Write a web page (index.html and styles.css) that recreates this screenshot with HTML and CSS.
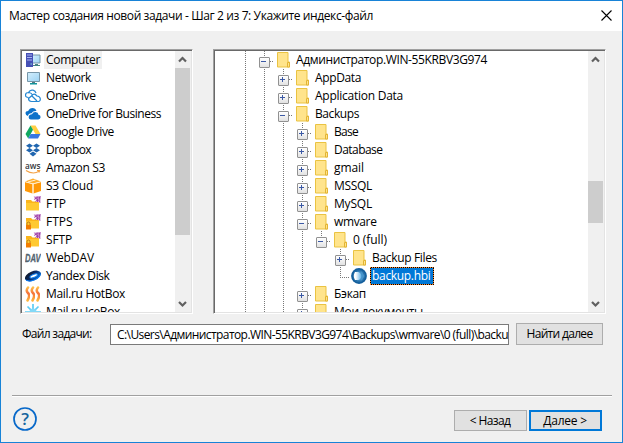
FILE: index.html
```html
<!DOCTYPE html>
<html lang="ru">
<head>
<meta charset="utf-8">
<title>Мастер создания новой задачи</title>
<link rel="stylesheet" href="styles.css">
</head>
<body>
<svg class="sprite" aria-hidden="true">
  <symbol id="folder" viewBox="0 0 13 16"><path d="M.5.5h10.500v9.500h1.500v5H.5z" fill="#ffe48c" stroke="#eac342"/><path d="M10.500 15v-4.500h2V15z" fill="#ffe48b" stroke="#e2b434"/></symbol>
  <symbol id="ftp" viewBox="0 0 16 16"><path d="M1 4h5l1.500 1.500H14V14H1z" fill="#fbb51b"/><path d="M1 7h13v7.500H1z" fill="#ffc931"/><path d="M9 0h6.500v6.500L12 6 9 3z" fill="#ecd3ef"/><path d="M9.500.8l5.500 5.500M9.300 3.500q4-4 6-1.500M12 .5l.5 5.500M10.500 5.500q3.500-2 5-5M14.700.5v6" fill="none" stroke="#9a35a3" stroke-width=".9"/></symbol>
  <symbol id="lock" viewBox="0 0 16 16"><path d="M2 11V9.500a1.500 1.500 0 013 0V11" fill="none" stroke="#b97413"/><path d="M1 11h5v4.500H1z" fill="#f27c00"/></symbol>
  <symbol id="flame" viewBox="0 0 5 16"><path d="M3 1.500q-2.500 3 0 5.500t-.5 7.500" fill="none" stroke="url(#heat)" stroke-width="2.500" stroke-linecap="round"/></symbol>
  <defs>
    <linearGradient id="heat" gradientUnits="userSpaceOnUse" x1="0" y1="1" x2="0" y2="15"><stop offset="0" stop-color="#ffc14a"/><stop offset=".45" stop-color="#f5713b"/><stop offset="1" stop-color="#ffb83d"/></linearGradient>
    <linearGradient id="screen" x2="1" y2="1"><stop stop-color="#d4eefc"/><stop offset="1" stop-color="#9bd2f3"/></linearGradient>
    <linearGradient id="disk" x2="1" y2="1"><stop stop-color="#111"/><stop offset=".5" stop-color="#0a2e70"/><stop offset="1" stop-color="#078aff"/></linearGradient>
    <linearGradient id="orb"><stop offset=".25" stop-color="#fff"/><stop offset="1" stop-color="#62b2e8"/></linearGradient>
  </defs>
</svg>

<div class="window">
  <header class="titlebar">
    <h1 data-w="364">Мастер создания новой задачи - Шаг 2 из 7: Укажите индекс-файл</h1>
    <svg class="close" viewBox="0 0 11 11"><path d="M.5.5l10 10M10.500.5l-10 10" stroke="#000" stroke-width="1.100"/></svg>
  </header>

  <main class="panels">
    <section class="panel sources">
      <ul class="list">
        <li class="current"><svg viewBox="0 0 16 16"><path d="M7 3h8v8H7z" fill="url(#screen)" stroke="#7796a8"/><path d="M10 12h3v1h2v1H8v-1h2z" fill="#468482"/><path d="M1 1h7v14H1z" fill="#4650b5"/><path d="M2 3h5M2 5.500h5M2 8h5" stroke="#a9b3f0"/><path d="M5.500 12h1.500" stroke="#7fe0d0"/></svg><span data-w="54">Computer</span></li>
        <li><svg viewBox="0 0 16 16"><path d="M2.500 2.500h12v9h-12z" fill="url(#screen)" stroke="#7796a8"/><path d="M7 12h3v1H7z" fill="#55767e"/><path d="M5 13h7v1.500H5z" fill="#11959c"/></svg><span data-w="45">Network</span></li>
        <li><svg viewBox="0 0 16 16"><path d="M3.500 9.500Q.5 9.500.5 7t3-2.500Q5 1.500 8 2.200q2.500.6 3 3M3.500 10.500L7 7.500q2-3 5 .5 3 .2 3.300 2.800.2 2.700-2.800 2.700H6.500q-3-.2-3-3zM3.500 5Q6 4 7.500 7M7 8l5 5" fill="none" stroke="#2587d2" stroke-width="1.200"/></svg><span data-w="49.500">OneDrive</span></li>
        <li><svg viewBox="0 0 16 16"><path d="M3 10Q.5 9.500.5 7.300T3.200 5Q4.500 2 7.500 2q3 0 4 3Q8 4.500 6.500 7.200 3.500 7 3 10z" fill="#0c72ca"/><path d="M6 13.500q-2.500-.2-2.300-2.700Q4 8.500 7 8.300q1-2.400 3.500-2.300 2.700.2 3 2.800 2.200.4 2.100 2.500-.2 2-2.300 2.200z" fill="#0c72ca"/></svg><span data-w="115">OneDrive for Business</span></li>
        <li><svg viewBox="0 0 16 16"><path d="M5.500 1.500h5l5 8.500h-5z" fill="#ffce43"/><path d="M5.500 1.500L8 5.800 3.200 14.500.5 10z" fill="#11a861"/><path d="M5.700 10h9.800L13 14.500H3.200z" fill="#3777e3"/></svg><span data-w="68">Google Drive</span></li>
        <li><svg viewBox="0 0 16 16"><path d="M4.500 1.500L8 3.800 4.500 6 1 3.800zM11.500 1.500L15 3.800 11.500 6 8 3.800zM4.500 6L8 8.300l-3.500 2.300L1 8.300zM11.500 6L15 8.300l-3.500 2.300L8 8.300zM8 9.500l3.500 2.300L8 14.500l-3.500-2.700z" fill="#2166b0"/></svg><span data-w="45">Dropbox</span></li>
        <li><svg viewBox="0 0 16 16"><text x="0" y="9" class="aws" textLength="15.500" lengthAdjust="spacingAndGlyphs">aws</text><path d="M1 10.500q7 4.500 13 .8M12 10.500h2.700l-.8 2" fill="none" stroke="#f4a143" stroke-width="1.100"/></svg><span data-w="59">Amazon S3</span></li>
        <li><svg viewBox="0 0 16 16"><path d="M0 3.500L8 .5l8 3-8 2z" fill="#ffad2b"/><path d="M0 4l7.500 2v9.500L0 13zM8.500 6L16 4v9l-7.500 2.500z" fill="#ff9807"/><path d="M3 4l7.500-2" stroke="#fff" stroke-width=".8"/><path d="M.3 3.800L8 6l7.700-2.200M8 6v9.500" fill="none" stroke="#fff3df" stroke-width=".7"/></svg><span data-w="47">S3 Cloud</span></li>
        <li><svg viewBox="0 0 16 16"><use href="#ftp"/></svg><span data-w="20">FTP</span></li>
        <li><svg viewBox="0 0 16 16"><use href="#ftp"/><use href="#lock"/></svg><span data-w="26.500">FTPS</span></li>
        <li><svg viewBox="0 0 16 16"><use href="#ftp"/><use href="#lock"/></svg><span data-w="26">SFTP</span></li>
        <li><svg viewBox="0 0 16 16"><text x="0" y="12" class="dav" textLength="15.500" lengthAdjust="spacingAndGlyphs">DAV</text></svg><span data-w="48">WebDAV</span></li>
        <li><svg viewBox="0 0 16 16"><ellipse cx="8" cy="8" rx="8.500" ry="4.600" transform="rotate(-23 8 8)" fill="url(#disk)"/><path d="M0 11q1.500 3.500 7 2.200 8-2.200 8.800-7.400-3.500 5.700-9 6.500Q2 13 0 11z" fill="#087fff"/><ellipse cx="8.800" cy="7.800" rx="4" ry="1.500" transform="rotate(-23 9 8)" fill="#fff" stroke="#1482f2"/></svg><span data-w="63.500">Yandex Disk</span></li>
        <li><svg viewBox="0 0 16 16"><use href="#flame" width="5" height="16"/><use href="#flame" x="5" width="5" height="16"/><use href="#flame" x="10" width="5" height="16"/></svg><span data-w="79">Mail.ru HotBox</span></li>
        <li><svg viewBox="0 0 16 16"><path d="M8 0v16M0 8h16M2.500 2.500l11 11M13.500 2.500l-11 11" stroke="#5ccdf5" stroke-width="1.700"/><circle cx="8" cy="8" r="3.500" fill="#83d9f7"/></svg><span data-w="74">Mail.ru IceBox</span></li>
      </ul>
      <div class="scrollbar"><svg viewBox="0 0 15 17"><path d="M4 10.500l3.500-3.500 3.500 3.500" class="chevron"/></svg><div class="thumb"></div><svg viewBox="0 0 15 17"><path d="M4 7l3.500 3.500L11 7" class="chevron"/></svg></div>
    </section>

    <section class="panel files">
      <ul class="tree">
        <li><i class="v"></i><b class="open mid"></b><svg><use href="#folder" width="13" height="16"/></svg><span data-w="191">Администратор.WIN-55KRBV3G974</span></li>
        <li><i class="v"></i><i class="v"></i><b class="mid"></b><svg><use href="#folder" width="13" height="16"/></svg><span data-w="46">AppData</span></li>
        <li><i class="v"></i><i class="v"></i><b class="mid"></b><svg><use href="#folder" width="13" height="16"/></svg><span data-w="88">Application Data</span></li>
        <li><i class="v"></i><i class="v"></i><b class="open mid"></b><svg><use href="#folder" width="13" height="16"/></svg><span data-w="44">Backups</span></li>
        <li><i class="v"></i><i class="v"></i><i class="v"></i><b class="mid"></b><svg><use href="#folder" width="13" height="16"/></svg><span data-w="24">Base</span></li>
        <li><i class="v"></i><i class="v"></i><i class="v"></i><b class="mid"></b><svg><use href="#folder" width="13" height="16"/></svg><span data-w="48.500">Database</span></li>
        <li><i class="v"></i><i class="v"></i><i class="v"></i><b class="mid"></b><svg><use href="#folder" width="13" height="16"/></svg><span data-w="30">gmail</span></li>
        <li><i class="v"></i><i class="v"></i><i class="v"></i><b class="mid"></b><svg><use href="#folder" width="13" height="16"/></svg><span data-w="38">MSSQL</span></li>
        <li><i class="v"></i><i class="v"></i><i class="v"></i><b class="mid"></b><svg><use href="#folder" width="13" height="16"/></svg><span data-w="38">MySQL</span></li>
        <li><i class="v"></i><i class="v"></i><i class="v"></i><b class="open mid"></b><svg><use href="#folder" width="13" height="16"/></svg><span data-w="42.500">wmvare</span></li>
        <li><i class="v"></i><i class="v"></i><i class="v"></i><i class="v"></i><b class="open last"></b><svg><use href="#folder" width="13" height="16"/></svg><span data-w="34">0 (full)</span></li>
        <li><i class="v"></i><i class="v"></i><i class="v"></i><i class="v"></i><i></i><b class="mid"></b><svg><use href="#folder" width="13" height="16"/></svg><span data-w="65">Backup Files</span></li>
        <li><i class="v"></i><i class="v"></i><i class="v"></i><i class="v"></i><i></i><b class="leaf last"></b><svg class="orb" viewBox="0 0 16 16"><circle cx="8" cy="8" r="7.900" fill="#135e9c"/><circle cx="8" cy="8" r="6.300" fill="#266fa9"/><path d="M6 3.500h5L13.500 8 11 12.500H6z" fill="#4593ca"/><path d="M4 4h3.300q3 1 3 4t-3 4H4Q1.500 8 4 4z" fill="url(#orb)"/></svg><span class="picked" data-w="58.500">backup.hbi</span></li>
        <li><i class="v"></i><i class="v"></i><i class="v"></i><b class="mid"></b><svg><use href="#folder" width="13" height="16"/></svg><span data-w="32">Бэкап</span></li>
        <li><i class="v"></i><i class="v"></i><i class="v"></i><b class="mid"></b><svg><use href="#folder" width="13" height="16"/></svg><span data-w="89">Мои документы</span></li>
      </ul>
      <div class="scrollbar"><svg viewBox="0 0 15 17"><path d="M4 10.500l3.500-3.500 3.500 3.500" class="chevron"/></svg><div class="thumb"></div><svg viewBox="0 0 15 17"><path d="M4 7l3.500 3.500L11 7" class="chevron"/></svg></div>
    </section>
  </main>

  <div class="path-row">
    <label><span data-w="69.500">Файл задачи:</span></label>
    <div class="field"><span data-w="391">C:\Users\Администратор.WIN-55KRBV3G974\Backups\wmvare\0 (full)\backu</span></div>
    <button class="find"><span data-w="66">Найти далее</span></button>
  </div>

  <footer class="footer">
    <svg class="help" viewBox="0 0 24 24"><circle cx="12" cy="12" r="11" fill="none" stroke="#0768c9" stroke-width="1.700"/><text x="12" y="17.500" text-anchor="middle">?</text></svg>
    <button><span data-w="40.500">&lt; Назад</span></button>
    <button class="default"><span data-w="43.500">Далее &gt;</span></button>
  </footer>
</div>
<script src="fit.js"></script>
</body>
</html>
```
FILE: styles.css
```css
* { box-sizing: border-box; }

body {
  margin: 0;
  font: 12px/18px "Open Sans", "Noto Sans", sans-serif;
  color: #000;
}

.sprite { position: absolute; width: 0; height: 0; }
svg { display: block; flex: none; }
ul { margin: 0; padding: 0; list-style: none; }
span, h1 { white-space: pre; }

.window {
  display: flex;
  flex-direction: column;
  width: 623px;
  height: 443px;
  border: 1px solid #1883d7;
  background: #f0f0f0;
  overflow: hidden;
}

.titlebar {
  display: flex;
  justify-content: space-between;
  align-items: flex-start;
  height: 30px;
  padding: 6px 10px 0 8px;
  background: #fff;
}
.titlebar h1 { margin: 0; font: inherit; }
.close { width: 11px; height: 11px; margin-top: 3px; }

.panels { display: flex; gap: 20px; padding: 18px 0 0 19px; }

.panel {
  display: flex;
  height: 265px;
  background: #fff;
  border: 1px solid;
  border-color: #a0a0a0 #fff #fff #a0a0a0;
  box-shadow: inset 1px 1px #696969, inset -1px -1px #e3e3e3;
  padding: 1px;
}
.sources { width: 173px; }
.files { width: 393px; }

.list, .tree { flex: 1; min-width: 0; height: 261px; overflow: hidden; }

.list li { display: flex; align-items: center; height: 18px; padding-left: 3px; }
.list svg { width: 16px; height: 16px; margin-right: 3px; }
.list span { padding: 0 2px; }
.list .current span { background: #f0f0f0; }

.scrollbar {
  display: flex;
  flex-direction: column;
  width: 16px;
  padding-right: 1px;
  background: #f0f0f0;
  background-clip: border-box;
}
.scrollbar svg { width: 15px; height: 17px; }
.scrollbar svg:last-child { margin-top: auto; }
.chevron { fill: none; stroke: #606060; stroke-width: 2.2; }
.thumb { background: #cdcdcd; }
.sources .thumb { height: 167px; }
.files .thumb { height: 42px; margin-top: 113px; }

.tree { padding-left: 21px; }
.tree li { display: flex; height: 18px; }
.tree i, .tree b { flex: none; width: 19px; height: 18px; }

.v {
  background: repeating-linear-gradient(#777 0 1px, #fff 1px 2px) 9px 0 / 1px 18px no-repeat;
}
.tree b {
  --height: 18px;
  display: flex;
  justify-content: center;
  padding-top: 6px;
  background:
    repeating-linear-gradient(#777 0 1px, #fff 1px 2px) 9px 0 / 1px var(--height) no-repeat,
    repeating-linear-gradient(90deg, #777 0 1px, #fff 1px 2px) 9px 10px / 10px 1px no-repeat;
}
.tree .last { --height: 11px; }
.tree b:not(.leaf)::before {
  content: "";
  width: 9px;
  height: 9px;
  border: 1px solid #919191;
  border-radius: 1px;
  background:
    linear-gradient(#3b59a5, #3b59a5) 1px 3px / 5px 1px no-repeat,
    linear-gradient(#3b59a5, #3b59a5) 3px 1px / 1px 5px no-repeat,
    linear-gradient(#fff, #e2e2e2);
}
.tree b.open::before {
  background:
    linear-gradient(#3b59a5, #3b59a5) 1px 3px / 5px 1px no-repeat,
    linear-gradient(#fff, #e2e2e2);
}
.tree svg { width: 13px; height: 16px; margin: 1px 4px 0 3px; }
.tree svg.orb { width: 16px; height: 16px; margin: 1px 3px 0 1px; }
.tree span { padding: 0 2px; }
.tree .picked {
  position: relative;
  padding-right: 3px;
  color: #fff;
  background: #0078d7;
}
.tree .picked::after {
  content: "";
  position: absolute;
  inset: 0;
  background:
    repeating-linear-gradient(90deg, #ff8728 0 1px, #000 1px 2px) top / 100% 1px no-repeat,
    repeating-linear-gradient(90deg, #ff8728 0 1px, #000 1px 2px) bottom / 100% 1px no-repeat,
    repeating-linear-gradient(#ff8728 0 1px, #000 1px 2px) left / 1px 100% no-repeat,
    repeating-linear-gradient(#ff8728 0 1px, #000 1px 2px) right / 1px 100% no-repeat;
}

.path-row { display: flex; align-items: flex-start; padding: 9px 0 0 21px; height: 31px; }
.path-row label { width: 88px; padding-top: 2px; }
.field {
  width: 399px;
  height: 21px;
  margin-top: 1px;
  padding: 1px 0 0 6px;
  border: 1px solid #7a7a7a;
  background: #fff;
  overflow: hidden;
}

button {
  display: flex;
  align-items: center;
  justify-content: center;
  width: 73px;
  height: 21px;
  padding: 0;
  border: 1px solid #adadad;
  background: #e1e1e1;
  font: inherit;
  color: #000;
}
.find { width: 87px; height: 22px; margin-left: 7px; }
.default { border: 2px solid #0078d7; }

.footer {
  display: flex;
  gap: 2px;
  margin: 50px 10px 0 11px;
  padding: 13px 10px 0 1px;
  border-top: 1px solid #a0a0a0;
  box-shadow: inset 0 1px #fff;
}
.footer button { margin-top: 1px; }
.footer button span { margin-right: 1px; }
.help { width: 24px; height: 24px; margin: -2px auto 0 0; }
.help text { font: 600 17px "Open Sans", sans-serif; fill: #17669f; }

.aws { font: 600 9px "Open Sans", sans-serif; fill: #34383d; }
.dav { font: italic 700 11px "Liberation Sans", sans-serif; fill: #52636f; stroke: #52636f; stroke-width: .3; }
```
FILE: fit.js
```js
// Tracks each label to the advance width of the dialog's native font.
document.querySelectorAll('[data-w]').forEach(function (el) {
  var range = document.createRange();
  range.selectNodeContents(el);
  var natural = range.getBoundingClientRect().width;
  el.style.letterSpacing = (el.dataset.w - natural) / el.textContent.length + 'px';
});
```
